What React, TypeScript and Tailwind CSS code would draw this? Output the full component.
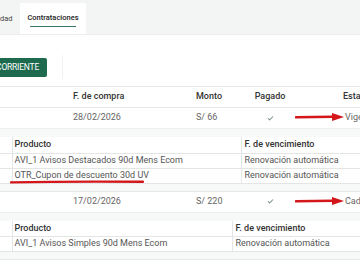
import { Check } from 'lucide-react'

type Item = { producto: string; venc: string; marked?: boolean }
type Row = { fecha: string; monto: string; estado: string; items: Item[]; split: number }

const rows: Row[] = [
  {
    fecha: '28/02/2026',
    monto: 'S/ 66',
    estado: 'Vigente',
    split: 229,
    items: [
      { producto: 'AVI_1 Avisos Destacados 90d Mens Ecom', venc: 'Renovación automática' },
      { producto: 'OTR_Cupon de descuento 30d UV', venc: 'Renovación automática', marked: true },
    ],
  },
  {
    fecha: '17/02/2026',
    monto: 'S/ 220',
    estado: 'Caducado',
    split: 220,
    items: [{ producto: 'AVI_1 Avisos Simples 90d Mens Ecom', venc: 'Renovación automática' }],
  },
]

function Arrow() {
  return (
    <svg width="50" height="10" viewBox="0 0 50 10" className="absolute left-[-50px] top-1/2 -translate-y-1/2">
      <path d="M1 5.2 L38 4.8" stroke="#d3171b" strokeWidth="2.6" strokeLinecap="round" />
      <path d="M37 1 L49 5 L37 9 Z" fill="#d3171b" />
    </svg>
  )
}

function Nested({ items, split }: { items: Item[]; split: number }) {
  return (
    <table className="w-full border-collapse text-[9px]">
      <tbody>
        <tr className="h-[16px] border-b border-[#e4e6e6] bg-white">
          <td className="w-[12px] border-r border-[#e4e6e6]" />
          <td className="border-r border-[#e4e6e6] pl-[2px] font-medium text-[#333]" style={{ width: split }}>
            Producto
          </td>
          <td className="pl-[3px] font-medium text-[#333]">F. de vencimiento</td>
        </tr>
        {items.map((it) => (
          <tr key={it.producto} className="h-[15px] border-b border-[#e4e6e6] bg-white">
            <td className="border-r border-[#e4e6e6]" />
            <td className="relative border-r border-[#e4e6e6] pl-[2px] text-[#555]">
              {it.producto}
              {it.marked && (
                <svg width="134" height="4" viewBox="0 0 134 4" className="absolute left-[-3px] top-[11px]">
                  <path d="M1 2.4 Q60 1.2 133 1.8" stroke="#d3171b" strokeWidth="2.4" fill="none" strokeLinecap="round" />
                </svg>
              )}
            </td>
            <td className="pl-[3px] text-[#555]">{it.venc}</td>
          </tr>
        ))}
      </tbody>
    </table>
  )
}

export default function App() {
  return (
    <div className="h-[266px] w-[360px] overflow-hidden bg-white font-['Roboto',sans-serif]">
      <div className="flex h-[35px] items-end border-b border-[#eceeee] bg-[#f3f5f5] pt-[3px] text-[7.5px]">
        <div className="flex h-full w-[20px] items-center text-[#444]">dad</div>
        <div className="flex h-full w-[66px] flex-col items-center justify-center bg-white pt-[2px]">
          <span className="font-medium text-[#222]">Contrataciones</span>
          <span className="mt-[3px] h-[1.5px] w-[46px] bg-[#3b7760]" />
        </div>
      </div>

      <div className="flex h-[51px] items-start pt-[23px]">
        <div className="flex h-[19px] w-[47px] items-center justify-end rounded-r-[2px] bg-[#1d6a4f] pr-[8px] text-[8.5px] tracking-tight text-white">
          CORRIENTE
        </div>
        <div className="ml-[15px] mt-[-3px] h-[24px] w-px bg-[#f1f1f1]" />
      </div>

      <table className="w-[420px] border-collapse text-[9px]">
        <thead>
          <tr className="h-[21px] border-y border-[#e6e8e8]">
            <th className="w-[70px]" />
            <th className="w-[126px] pl-[3px] text-left font-medium text-[#333]">F. de compra</th>
            <th className="w-[48px] text-left font-medium text-[#333]">Monto</th>
            <th className="w-[52px] font-medium text-[#333]">Pagado</th>
            <th className="pl-[47px] text-left font-medium text-[#333]">Estado</th>
          </tr>
        </thead>
        <tbody>
          {rows.map((r) => (
            <>
              <tr key={r.fecha} className="h-[21px] border-b border-[#eceeee]">
                <td />
                <td className="pl-[3px] text-[#666]">{r.fecha}</td>
                <td className="text-[#666]">{r.monto}</td>
                <td>
                  <Check size={7} strokeWidth={3.5} className="mx-auto text-[#7d8f82]" />
                </td>
                <td className="pl-[49px] text-[#666]">
                  <span className="relative">
                    <Arrow />
                    {r.estado}
                  </span>
                </td>
              </tr>
              <tr key={r.fecha + '-items'} className="border-b border-[#e6e8e8] bg-[#f7f8f8]">
                <td colSpan={5} className="pb-[7px] pt-[8px]">
                  <Nested items={r.items} split={r.split} />
                </td>
              </tr>
            </>
          ))}
        </tbody>
      </table>
    </div>
  )
}
